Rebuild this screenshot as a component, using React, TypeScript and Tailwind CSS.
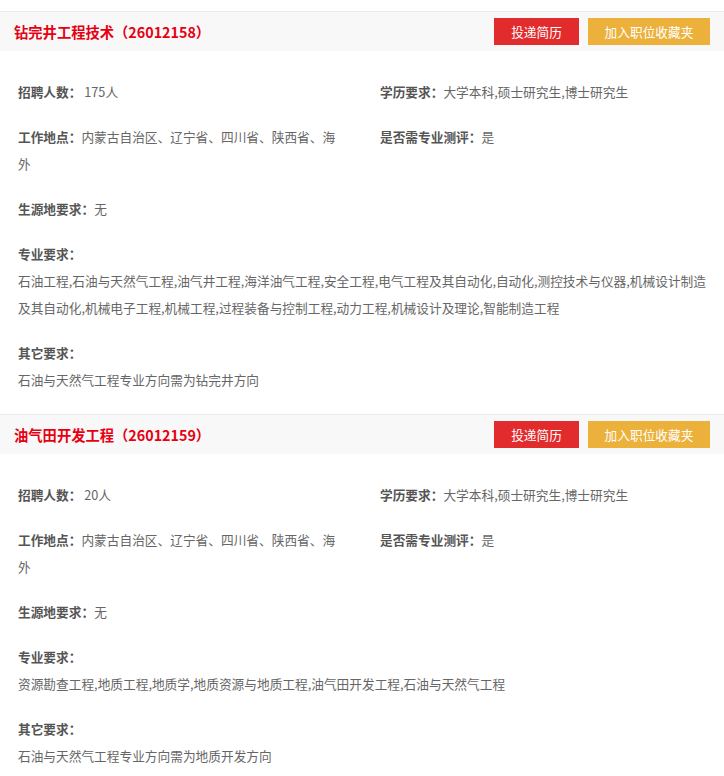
import React from "react";

type Job = {
  title: string;
  count: string;
  edu: string;
  place: string;
  eval: string;
  origin: string;
  majors: string;
  other: string;
};

const jobs: Job[] = [
  {
    title: "钻完井工程技术（26012158）",
    count: "175人",
    edu: "大学本科,硕士研究生,博士研究生",
    place: "内蒙古自治区、辽宁省、四川省、陕西省、海外",
    eval: "是",
    origin: "无",
    majors:
      "石油工程,石油与天然气工程,油气井工程,海洋油气工程,安全工程,电气工程及其自动化,自动化,测控技术与仪器,机械设计制造及其自动化,机械电子工程,机械工程,过程装备与控制工程,动力工程,机械设计及理论,智能制造工程",
    other: "石油与天然气工程专业方向需为钻完井方向",
  },
  {
    title: "油气田开发工程（26012159）",
    count: "20人",
    edu: "大学本科,硕士研究生,博士研究生",
    place: "内蒙古自治区、辽宁省、四川省、陕西省、海外",
    eval: "是",
    origin: "无",
    majors: "资源勘查工程,地质工程,地质学,地质资源与地质工程,油气田开发工程,石油与天然气工程",
    other: "石油与天然气工程专业方向需为地质开发方向",
  },
];

const Label = ({ children }: { children: React.ReactNode }) => (
  <span className="font-bold text-[#555]">{children}</span>
);

function Card({ job }: { job: Job }) {
  return (
    <div className="border-t border-[#ebebeb]">
      <div className="h-[39px] bg-[#f8f8f8] flex items-center justify-between pl-[14px] pr-[14px]">
        <div className="text-[14.3px] font-bold text-[#e60012]">{job.title}</div>
        <div className="flex gap-[9px]">
          <div className="w-[85px] h-[27px] bg-[#e22b2d] text-white text-[12.7px] flex items-center justify-center">
            投递简历
          </div>
          <div className="w-[122px] h-[27px] bg-[#ebb13b] text-white text-[12.7px] flex items-center justify-center">
            加入职位收藏夹
          </div>
        </div>
      </div>
      <div className="pt-[27px] pb-[21px] pl-[18px] pr-[18px] text-[12.7px] leading-[27px] text-[#666] flex flex-col gap-[18px]">
        <div className="grid grid-cols-[362px_1fr] -mr-[18px]">
          <div>
            <Label>招聘人数：</Label> {job.count}
          </div>
          <div>
            <Label>学历要求：</Label>
            {job.edu}
          </div>
        </div>
        <div className="grid grid-cols-[362px_1fr] -mr-[18px]">
          <div className="pr-[36px]">
            <Label>工作地点：</Label>
            {job.place}
          </div>
          <div>
            <Label>是否需专业测评：</Label>
            {job.eval}
          </div>
        </div>
        <div>
          <Label>生源地要求：</Label>
          {job.origin}
        </div>
        <div>
          <div>
            <Label>专业要求：</Label>
          </div>
          <div>{job.majors}</div>
        </div>
        <div>
          <div>
            <Label>其它要求：</Label>
          </div>
          <div>{job.other}</div>
        </div>
      </div>
    </div>
  );
}

export default function App() {
  return (
    <div
      className="w-[724px] bg-white pt-[11px]"
      style={{ fontFamily: '"Noto Sans CJK SC", "Noto Sans", sans-serif' }}
    >
      {jobs.map((j) => (
        <Card key={j.title} job={j} />
      ))}
    </div>
  );
}
